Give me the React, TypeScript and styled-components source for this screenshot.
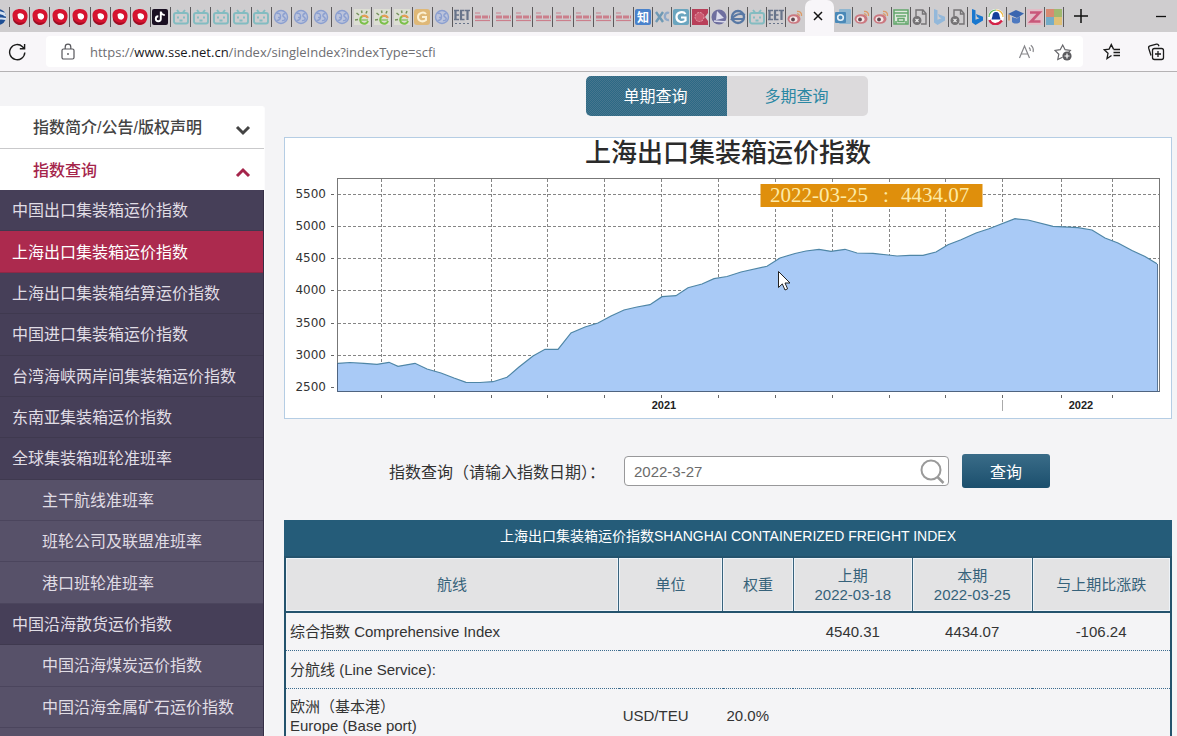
import React from 'react';
import styled, { createGlobalStyle, css } from 'styled-components';

const Global = createGlobalStyle`
  * { box-sizing: border-box; }
  body {
    margin: 0;
    background: #f4f4f6;
    font-family: "Liberation Sans", "Noto Sans CJK SC", sans-serif;
    font-size: 16px;
    color: #333;
  }
  button, input { font-family: inherit; }
`;

const Screen = styled.div`
  display: flex;
  flex-direction: column;
  height: 100vh;
  overflow: hidden;
`;

/* ---------- browser chrome ---------- */

const TabStrip = styled.div`
  display: flex;
  flex: none;
  height: 32px;
  background: #cfcdcf;
`;

const TabGroup = styled.div<{ $grow: number }>`
  display: flex;
  flex: ${(p) => p.$grow} 1 0;
  min-width: 0;
  padding: 7px 0 5px;
`;

const MiniTab = styled.button<{ $last?: boolean }>`
  flex: 1 1 0;
  min-width: 0;
  display: flex;
  align-items: center;
  justify-content: center;
  padding: 0;
  border: 0;
  border-right: 1px solid ${(p) => (p.$last ? 'transparent' : '#5c5a5c')};
  background: none;
`;

const EdgeTab = styled(MiniTab)`
  flex: none;
  width: 10px;
  margin: 7px 0 5px;
  padding-right: 3px;
  justify-content: flex-end;
  overflow: hidden;
`;

const ActiveTab = styled.button`
  flex: none;
  width: 29px;
  display: flex;
  align-items: center;
  justify-content: center;
  padding: 0 3px 0 0;
  border: 0;
  border-radius: 7px 7px 0 0;
  background: #f8f6f9;
`;

const WindowTools = styled.div`
  flex: none;
  width: 113px;
  display: flex;
  align-items: center;
  justify-content: space-between;
  padding: 0 10px 0 9px;
`;

const IconButton = styled.button`
  display: flex;
  flex: none;
  padding: 0;
  border: 0;
  background: none;
`;

const Toolbar = styled.div`
  display: flex;
  flex: none;
  align-items: center;
  gap: 20px;
  height: 40px;
  padding: 0 12px 0 8px;
  background: #f8f6f9;
  border-bottom: 1px solid #b4b2b4;
`;

const AddressBar = styled.div`
  flex: 1;
  display: flex;
  align-items: center;
  gap: 14px;
  height: 31px;
  padding: 0 10px 0 14px;
  border-radius: 4px;
  background: #fff;
`;

const Url = styled.div`
  flex: 1;
  font: 13px/20px "Open Sans", sans-serif;
  color: #6e6e72;
  b { font-weight: 400; color: #17171a; }
`;

const AddressTools = styled.div`
  display: flex;
  gap: 18px;
`;

const ToolbarEnd = styled.div`
  display: flex;
  gap: 26px;
`;

/* ---------- page ---------- */

const Page = styled.div`
  flex: 1;
  min-height: 0;
  display: flex;
  gap: 19px;
  overflow: hidden;
`;

const Sidebar = styled.nav`
  flex: none;
  width: 265px;
  display: flex;
  flex-direction: column;
  margin-top: 34px;
  border-right: 1px solid #fcfcfd;
  border-top-right-radius: 3px;
  overflow: hidden;
`;

const SectionToggle = styled.button<{ $open?: boolean }>`
  flex: none;
  display: flex;
  align-items: center;
  justify-content: space-between;
  height: ${(p) => (p.$open ? 41 : 43)}px;
  padding: 0 13px 2px 33px;
  border: 0;
  border-bottom: ${(p) => (p.$open ? 0 : 1)}px solid #c9c9cb;
  background: #fff;
  font-size: 16px;
  font-weight: 500;
  color: ${(p) => (p.$open ? '#a5254b' : '#444')};
  svg { margin-top: 8px; }
`;

const IndexList = styled.ul`
  flex: none;
  display: grid;
  grid-auto-rows: 1fr;
  min-height: 538px;
  margin: 0;
  padding: 0;
  list-style: none;
  background: #463f58;
  border-right: 1px solid #352f46;
`;

const IndexLink = styled.a<{ $sub?: boolean; $current?: boolean }>`
  display: flex;
  align-items: center;
  height: 100%;
  padding: 0 0 2px ${(p) => (p.$sub ? 42 : 12)}px;
  border-bottom: 1px solid #3f394f;
  background: #463f58;
  color: #e0dde5;
  text-decoration: none;
  ${(p) => p.$sub && css`background: #575169; border-color: #4b455d;`}
  ${(p) => p.$current && css`background: #ac2a4e; border-color: #8d2846; color: #fff;`}
`;

const ListTail = styled.div`
  flex: 1;
  background: #575169;
  border-right: 1px solid #352f46;
`;

const Main = styled.main`
  flex: 1;
  min-width: 0;
  padding: 4px 5px 0 0;
`;

const ModeSwitch = styled.div`
  display: flex;
  justify-content: center;
  padding-right: 2px;
`;

const ModeButton = styled.button<{ $active?: boolean }>`
  width: 141px;
  height: 40px;
  padding: 0 2px 2px 0;
  border: 0;
  border-radius: 0 5px 5px 0;
  background: #dcdadc;
  color: #2b87a3;
  font-size: 16px;
  ${(p) => p.$active && css`
    border-radius: 5px 0 0 5px;
    background: conic-gradient(#2c6985 25%, #47768e 0 50%, #2c6985 0 75%, #47768e 0) 0 0 / 2px 2px;
    color: #fff;
  `}
`;

const ChartPanel = styled.div`
  margin-top: 21px;
  border: 1px solid #b5cde4;
  background: #fff;
  svg { display: block; width: 100%; height: auto; }
`;

const QueryForm = styled.form`
  display: flex;
  align-items: center;
  justify-content: center;
  gap: 13px;
  margin-top: 35px;
  padding-right: 17px;
`;

const QueryLabel = styled.label`
  margin-right: 6px;
  color: #333;
`;

const DateField = styled.div`
  display: flex;
  align-items: center;
  width: 325px;
  height: 30px;
  padding: 0 3px 0 9px;
  border: 1px solid #98989a;
  border-radius: 4px;
  background: #fff;
`;

const DateInput = styled.input`
  flex: 1;
  min-width: 0;
  padding: 0;
  border: 0;
  outline: 0;
  background: none;
  font-size: 15px;
  color: #6b6b6b;
`;

const QueryButton = styled.button`
  width: 88px;
  height: 34px;
  padding: 0;
  border: 0;
  border-radius: 3px;
  background: linear-gradient(#3a6c88, #1b4f6d);
  color: #fff;
  font-size: 16px;
`;

const IndexTable = styled.table`
  width: 100%;
  margin-top: 32px;
  border-collapse: collapse;
  table-layout: fixed;
  border: 2px solid #24536d;
  font-size: 15px;
  line-height: 19px;

  caption {
    height: 36px;
    padding-top: 7px;
    background: #255c79;
    color: #fff;
    font-size: 14px;
  }
  th {
    height: 55px;
    padding: 0;
    border: 1px solid #39637c;
    border-bottom: 2px solid #24536d;
    background: #e3e3e4;
    box-shadow: inset 0 0 0 1px #eef3f8;
    font-weight: 400;
    color: #36627a;
  }
  td {
    height: 38px;
    padding: 0 4px;
    border-bottom: 1px dotted #3b6b8e;
    text-align: center;
    color: #333;
  }
  td:nth-child(-n + 3) { text-align: left; }
  tbody tr:last-child td { height: 56px; }
`;

/* ---------- tab icons ---------- */

type IconName =
  | 'edge' | 'red' | 'tiktok' | 'bili' | 'globe' | 'sun' | 'gold' | 'eet' | 'lines' | 'zhi' | 'xc' | 'g'
  | 'puzzle' | 'sail' | 'sphere' | 'weibo' | 'outlook' | 'shop' | 'file' | 'bing' | 'bingDark' | 'qq' | 'cap' | 'z' | 'ms';

const glyphs: Record<IconName, React.ReactNode> = {
  edge: (
    <g>
      <circle cx="8" cy="8" r="8" fill="#1e4e94" />
      <path d="M1 9C5 3 12 3 16 7M3 13c4-4 9-4 13-3M8 3c3 0 5 1 7 2" stroke="#d8e4f2" strokeWidth="2" fill="none" />
    </g>
  ),
  red: (
    <g>
      <path d="M8 0C13 0 15.500 3 15.500 7c0 5-3 9-7.500 9-2 0-3-1-5-3C1 11 .5 9 .5 6 .5 2 4 0 8 0Z" fill="#d5142f" />
      <path d="M1 9c2 4 7 6 12 4-2 3-7 4-10 1C1 12 1 11 1 9Z" fill="#a00d25" />
      <path d="M5.500 5.500c1-1.500 3-1.500 4-1 2 .5 3 2 2.500 4-.5 1.500-2 2.500-4 2C6.500 10.200 6 9 5.800 7.800Z" fill="#fff" />
    </g>
  ),
  tiktok: (
    <g>
      <rect x="0" y="0" width="16" height="16" rx="2" fill="#1a0f22" />
      <path d="M8.800 2.500v7.300a2.500 2.500 0 1 1-2.500-2.500M8.800 2.500c.3 2.300 1.800 3.400 4 3.600" stroke="#fff" strokeWidth="1.900" fill="none" />
    </g>
  ),
  bili: (
    <g fill="none" stroke="#83bcc1" strokeWidth="1.900">
      <rect x="1" y="4" width="14" height="10.500" rx="2" />
      <path d="M4 1l2.500 3M12 1L9.500 4M5 7.500v2M11 7.500v2M6.500 11.500h3" />
    </g>
  ),
  globe: (
    <g fill="none" stroke="#8b9fd0" strokeWidth="1.400">
      <circle cx="8" cy="8" r="6.500" fill="#bcc4dc" />
      <path d="M3.500 4.500c3-1 4 1 4 3s-1 4-4 4M12.500 4.500c-2 0-3 1-2.500 2.500l2 2c1 1.500-1 3-3 2.500M5 8.500h3" />
    </g>
  ),
  sun: (
    <g>
      <rect width="16" height="16" fill="#dddfd4" />
      <path d="M13.500 8.500a4 4 0 1 0 .5 3.500" fill="none" stroke="#7cc04a" strokeWidth="2" />
      <path d="M8 7.500a4 4 0 0 1 6 1.500" stroke="#ea9a56" strokeWidth="2" fill="none" />
      <path d="M7 11h7" stroke="#8cc46a" strokeWidth="1.500" />
      <path d="M2.500 4l2.500 2M7.500 1.500l.5 2.500M13 2l-1 2.500M1 11l3-.5" stroke="#77935e" strokeWidth="1.500" />
    </g>
  ),
  gold: (
    <g>
      <rect width="16" height="16" rx="3" fill="#dfb877" />
      <path d="M12 5C10 2.500 4 3.500 4 8s5 5.500 8 3V8H8" fill="none" stroke="#fbf0d3" strokeWidth="2" />
    </g>
  ),
  eet: (
    <g stroke="#68748a" fill="none">
      <path d="M0 1.500h5M1 6h4M0 10.500h5M6 1.500h4.500M6.500 6h4M6 10.500h4.500M11 1.500h5" strokeWidth="1.700" />
      <path d="M1.500 1v10M7 1v10M13.500 1v10" strokeWidth="2.200" />
      <path d="M1 14.500h14" strokeDasharray="2 2" />
    </g>
  ),
  lines: (
    <g stroke="#cb7f8c">
      <path d="M1 4h5" strokeWidth="1" />
      <path d="M1 8h15" strokeWidth="3" strokeDasharray="6 1" />
      <path d="M1 11.500h15" strokeWidth="1.200" />
    </g>
  ),
  zhi: (
    <g>
      <rect width="16" height="16" rx="2" fill="#4a82cb" />
      <text x="8" y="12.500" fontSize="12" fontWeight="700" textAnchor="middle" fill="#fff">知</text>
    </g>
  ),
  xc: (
    <g fill="none" strokeWidth="2.400">
      <path d="M2 3l7 10M9 3L2 13" stroke="#6f99b4" />
      <path d="M15 4c-5-2-6 8 0 7" stroke="#8fa9c8" />
    </g>
  ),
  g: (
    <g>
      <rect width="16" height="16" rx="2" fill="#6aa5bf" />
      <path d="M12.500 5C10.500 2 3.500 2.500 3.500 8s6 6 9 3.500V8.500H8" fill="none" stroke="#fff" strokeWidth="2.200" />
    </g>
  ),
  puzzle: (
    <g>
      <path d="M0 0h16v4l-3 4 3 4v4H0Z" fill="#b9405a" />
      <circle cx="7.500" cy="8" r="4.500" fill="#cc5a70" stroke="#e4a3af" strokeDasharray="2 1" />
    </g>
  ),
  sail: (
    <g>
      <circle cx="8" cy="8" r="7.500" fill="#6f6f9f" />
      <path d="M6 2l7 7-8 2Z" fill="#dcdcec" />
      <path d="M3 12l12 1" stroke="#dcdcec" strokeWidth="1.500" />
    </g>
  ),
  sphere: (
    <g fill="none" stroke="#5878a4">
      <circle cx="8" cy="8" r="6" strokeWidth="2.400" />
      <path d="M1 11C5 5 10 4 15 6M3 10h10" strokeWidth="2" />
    </g>
  ),
  weibo: (
    <g>
      <ellipse cx="7" cy="10" rx="6.500" ry="4.800" fill="#cb7880" />
      <ellipse cx="6.500" cy="10.200" rx="4" ry="3" fill="#f3e6e6" />
      <circle cx="6" cy="10.500" r="1.900" fill="#604850" />
      <path d="M10 2.500c3-.5 5 1.500 4.500 4.500M10 5c1.500-.3 2.500.6 2.200 2" fill="none" stroke="#dc9a66" strokeWidth="1.300" />
    </g>
  ),
  outlook: (
    <g>
      <rect x="4" y="0" width="12" height="15" rx="1" fill="#8fb6d0" />
      <rect x="0" y="3" width="11" height="11" rx="1" fill="#4a89b8" />
      <circle cx="5.500" cy="8.500" r="2.800" fill="none" stroke="#e6f1f8" strokeWidth="1.600" />
    </g>
  ),
  shop: (
    <g fill="none" stroke="#63a76c" strokeWidth="1.500">
      <rect x="1" y="1" width="14" height="14" fill="#dfe8dd" />
      <path d="M1 4h14M3 7h10M5 9.500h6v3H5zM3 15v-3M13 15v-3" />
    </g>
  ),
  file: (
    <g fill="none" stroke="#757375" strokeWidth="1.400">
      <path d="M4 7V1h7l3 3.500V15H9M10.500 1v4H14" />
      <circle cx="5" cy="11.500" r="3.800" fill="#757375" />
      <path d="M3.500 10l3 3M6.500 10l-3 3" stroke="#eee" strokeWidth="1.100" />
    </g>
  ),
  bing: <path d="M3 0l3.500 1.300v9.500l4-1.500L8 8 7 5l7 2.700V11.500L6.500 16 3 13.500Z" fill="#93b8da" />,
  bingDark: <path d="M3 0l3.500 1.300v9.500l4-1.500L8 8 7 5l7 2.700V11.500L6.500 16 3 13.500Z" fill="#1877cf" />,
  qq: (
    <g>
      <circle cx="8" cy="8" r="8" fill="#fff" />
      <path d="M1.500 11c2 5 8 6 12.500.5" stroke="#d32348" strokeWidth="2.500" fill="none" />
      <path d="M1 8c0-4 3-7 7-7" stroke="#5cb85c" strokeWidth="1.200" fill="none" />
      <path d="M8 1c4 0 7 3 7 7" stroke="#efb83d" strokeWidth="1.200" fill="none" />
      <path d="M8 3c2.500 0 3.500 2 3.500 4l1 3.500h-9l1-3.500C4.500 5 5.500 3 8 3Z" fill="#153f9b" />
    </g>
  ),
  cap: (
    <g>
      <path d="M0 5l8-4 8 3.500-7 4.500Z" fill="#3b66b0" />
      <path d="M4 8v5c2 2 6 2 8 0V7L9 9.500Z" fill="#4e79c0" />
      <path d="M1 5.500v6" stroke="#d4883a" strokeWidth="1.200" />
    </g>
  ),
  z: (
    <g>
      <rect width="16" height="16" fill="#e2bcc6" />
      <path d="M3 3.500h9.500L4 12.500h9.500" fill="none" stroke="#c9577a" strokeWidth="2.600" />
    </g>
  ),
  ms: (
    <g>
      <rect width="8" height="8" fill="#d88a72" />
      <rect x="8" width="8" height="8" fill="#a0b870" />
      <rect y="8" width="8" height="8" fill="#74acc8" />
      <rect x="8" y="8" width="8" height="8" fill="#dfc077" />
    </g>
  ),
};

const IconSvg = styled.svg`
  flex: none;
`;

const Favicon = ({ name }: { name: IconName }) => (
  <IconSvg width="16" height="16" viewBox="0 0 16 16" aria-hidden="true">{glyphs[name]}</IconSvg>
);

const fill = (name: IconName, n: number): IconName[] => Array(n).fill(name);

const leftTabs: IconName[] = [
  ...fill('red', 7), 'tiktok', ...fill('bili', 5), ...fill('globe', 4), ...fill('sun', 3),
  'gold', 'globe', 'eet', ...fill('lines', 8),
];
const middleTabs: IconName[] = ['zhi', 'xc', 'g', 'puzzle', 'sail', 'sphere', 'bili', 'eet', 'weibo'];
const rightTabs: IconName[] = [
  'outlook', 'weibo', 'weibo', 'shop', 'file', 'bing', 'file', 'bingDark', 'qq', 'cap', 'z', 'ms',
];

const Tabs = ({ grow, icons, openEnd }: { grow: number; icons: IconName[]; openEnd?: boolean }) => (
  <TabGroup $grow={grow}>
    {icons.map((name, i) => (
      <MiniTab key={i} aria-label={name} $last={openEnd && i === icons.length - 1}>
        <Favicon name={name} />
      </MiniTab>
    ))}
  </TabGroup>
);

const BrowserChrome = () => (
  <>
    <TabStrip>
      <EdgeTab aria-label="edge"><Favicon name="edge" /></EdgeTab>
      <Tabs grow={624} icons={leftTabs} />
      <Tabs grow={171} icons={middleTabs} openEnd />
      <ActiveTab aria-label="Close tab">
        <svg width="10" height="10" viewBox="0 0 10 10"><path d="M1 1l8 8M9 1L1 9" stroke="#111" strokeWidth="1.500" /></svg>
      </ActiveTab>
      <Tabs grow={230} icons={rightTabs} />
      <WindowTools>
        <IconButton aria-label="New tab">
          <svg width="16" height="16" viewBox="0 0 16 16"><path d="M1 8h14M8 1v14" stroke="#111" strokeWidth="1.500" /></svg>
        </IconButton>
        <IconButton aria-label="Minimize">
          <svg width="12" height="12" viewBox="0 0 12 12"><path d="M1 6.500h10" stroke="#111" strokeWidth="1.300" /></svg>
        </IconButton>
      </WindowTools>
    </TabStrip>
    <Toolbar>
      <IconButton aria-label="Reload">
        <svg width="18" height="18" viewBox="0 0 18 18" fill="none" stroke="#1b1b1b" strokeWidth="1.400">
          <path d="M16.800 9.500a7.600 7.600 0 1 1-2.300-5.800l1.800 1.800M16.600 1v4.800h-4.800" />
        </svg>
      </IconButton>
      <AddressBar>
        <svg width="16" height="18" viewBox="0 0 16 18" fill="none" stroke="#55555a" strokeWidth="1.200">
          <rect x="2" y="6" width="12" height="10" rx="1.500" />
          <path d="M5.200 6V4a2.800 2.800 0 0 1 5.600 0v2" />
          <circle cx="8" cy="11" r=".9" fill="#55555a" stroke="none" />
        </svg>
        <Url>https://<b>www.sse.net.cn</b>/index/singleIndex?indexType=scfi</Url>
        <AddressTools>
          <IconButton aria-label="Read aloud">
            <svg width="18" height="18" viewBox="0 0 18 18" fill="none" stroke="#858589" strokeWidth="1.200">
              <path d="M1.500 15L6.500 3l5 12M3.200 11h6.600M11 4.500c1 .7 1.500 2 1.300 3.500M12.800 2.300c2 1.500 2.900 4 2.300 6.700" />
            </svg>
          </IconButton>
          <IconButton aria-label="Add to favorites">
            <svg width="19" height="18" viewBox="0 0 19 18" fill="none" stroke="#66666a" strokeWidth="1.200">
              <path d="M8.500 14.200L3.800 16.500l1-5.200L1 7.500l5.200-.8L8.700 2l2.400 4.700 5.200.8-1.500 1.500" />
              <circle cx="13" cy="13" r="4.600" fill="#5b5b5f" stroke="none" />
              <path d="M13 10.500v5M10.500 13h5" stroke="#fff" />
            </svg>
          </IconButton>
        </AddressTools>
      </AddressBar>
      <ToolbarEnd>
        <IconButton aria-label="Favorites">
          <svg width="18" height="18" viewBox="0 0 18 18" fill="none" stroke="#1b1b1b" strokeWidth="1.300">
            <path d="M8.500 12.500L4 15.500l1-5.200-3.800-3.500 4.900-.7L8.300 1.600l2.200 4.500M10.500 6.500H17M10.500 9.500H17M10.500 12.500H17" />
          </svg>
        </IconButton>
        <IconButton aria-label="Collections">
          <svg width="18" height="18" viewBox="0 0 18 18" fill="none" stroke="#1b1b1b" strokeWidth="1.300">
            <path d="M4 12.500L1.700 5.200C1.400 4 2 3.200 3 2.900l6.500-1.800c1-.2 1.800.2 2.100 1.200l.3 1" />
            <rect x="5.500" y="5.500" width="11" height="11" rx="2" />
            <path d="M11 8v6M8 11h6" />
          </svg>
        </IconButton>
      </ToolbarEnd>
    </Toolbar>
  </>
);

/* ---------- chart ---------- */

const series: [number, number][] = [
  [338, 363.3], [350, 362.5], [364, 363.3], [377, 364.3], [389, 362.3], [398, 366.3], [415, 363.3], [427, 369],
  [441, 373], [454, 378], [466, 382.3], [480, 382.5], [493, 381.7], [507, 377.3], [519, 367], [533, 356],
  [545, 349.3], [558, 349.3], [571, 333], [585, 327], [598, 323], [611, 316], [624, 310], [637, 307],
  [650, 304.7], [662, 296.7], [676, 295.7], [688, 287.7], [702, 284], [714, 278.7], [727, 276.5], [741, 272],
  [767, 266.3], [780, 258], [795, 253.5], [806, 251], [819, 249.3], [831, 251.3], [845, 249.3], [857, 253],
  [873, 253.3], [897, 256], [910, 255.3], [923, 255.3], [936, 252], [948, 244.7], [961, 239.7], [976, 233],
  [989, 228.7], [1015, 218.7], [1028, 220], [1053, 226.3], [1078, 227.7], [1092, 230], [1105, 238],
  [1118, 243], [1132, 250.5], [1145, 256.5], [1157, 263.7],
];
const months = [381.5, 434.5, 491.5, 547.5, 604.5, 661.5, 718.5, 775.5, 832.5, 889.5, 945.5, 1002.5, 1061.5, 1112.5];
const levels: [number, number][] = [
  [5500, 194], [5000, 226], [4500, 258], [4000, 290], [3500, 323], [3000, 355], [2500, 387],
];
const line = series.map(([x, y]) => `${x},${y}`).join(' ');

const FreightChart = () => (
  <svg viewBox="285 138 886 280" role="img" aria-label="上海出口集装箱运价指数">
    <text x="728" y="162" fontSize="26" fontWeight="500" textAnchor="middle" fill="#2b2b2b">上海出口集装箱运价指数</text>
    <g stroke="#858585" strokeDasharray="3 2">
      {months.map((x) => <path key={x} d={`M${x} 179V391`} />)}
      {levels.map(([v, y]) => <path key={v} d={`M338 ${y + 0.5}H1159`} />)}
    </g>
    <polygon points={`338,391 ${line} 1157,391`} fill="#a9caf6" />
    <path d="M1158.500 264V391" stroke="#fff" />
    <polyline points={line} fill="none" stroke="#4f86a6" strokeWidth="1.200" />
    <path d="M1157.500 264V391" stroke="#5a7898" />
    <rect x="337.500" y="178.500" width="822" height="213" fill="none" stroke="#777" />
    <path d="M337.500 363V391.500H1159.500" fill="none" stroke="#4f6480" />
    <g stroke="#666">
      {months.map((x) => <path key={x} d={`M${x} 395V398`} />)}
      {levels.map(([v, y]) => <path key={v} d={`M331 ${y + 0.5}H334`} />)}
    </g>
    <path d="M1002.500 400V411" stroke="#aaa" />
    <g fontFamily="DejaVu Sans, sans-serif" fontSize="12" textAnchor="end" fill="#333">
      {levels.map(([v, y]) => <text key={v} x="326" y={y + 4}>{v}</text>)}
    </g>
    <g fontSize="11" fontWeight="700" textAnchor="middle" fill="#222">
      <text x="664" y="409">2021</text>
      <text x="1081" y="409">2022</text>
    </g>
    <rect x="760.500" y="184" width="222" height="23" fill="#df8f0c" />
    <g fontFamily="Liberation Serif, serif" fontSize="21" fill="#fdeaa6">
      <text x="770" y="202">2022-03-25</text>
      <text x="883" y="202">:</text>
      <text x="901" y="202">4434.07</text>
    </g>
    <path d="M778.500 271.500v16l3.800-3.600 2.700 6.100 2.600-1.200-2.600-5.800h5Z" fill="#fff" stroke="#222" />
  </svg>
);

/* ---------- sidebar ---------- */

const indexes: { name: string; sub?: boolean; current?: boolean }[] = [
  { name: '中国出口集装箱运价指数' },
  { name: '上海出口集装箱运价指数', current: true },
  { name: '上海出口集装箱结算运价指数' },
  { name: '中国进口集装箱运价指数' },
  { name: '台湾海峡两岸间集装箱运价指数' },
  { name: '东南亚集装箱运价指数' },
  { name: '全球集装箱班轮准班率' },
  { name: '主干航线准班率', sub: true },
  { name: '班轮公司及联盟准班率', sub: true },
  { name: '港口班轮准班率', sub: true },
  { name: '中国沿海散货运价指数' },
  { name: '中国沿海煤炭运价指数', sub: true },
  { name: '中国沿海金属矿石运价指数', sub: true },
];

const Chevron = ({ up }: { up?: boolean }) => (
  <svg width="16" height="11" viewBox="0 0 16 11" fill="none" stroke="currentColor" strokeWidth="3">
    <path d={up ? 'M2 9l6-6 6 6' : 'M2 2l6 6 6-6'} />
  </svg>
);

export default function App() {
  return (
    <Screen>
      <Global />
      <BrowserChrome />
      <Page>
        <Sidebar>
          <SectionToggle>指数简介/公告/版权声明<Chevron /></SectionToggle>
          <SectionToggle $open>指数查询<Chevron up /></SectionToggle>
          <IndexList>
            {indexes.map(({ name, sub, current }) => (
              <li key={name}>
                <IndexLink href="#" $sub={sub} $current={current}>{name}</IndexLink>
              </li>
            ))}
          </IndexList>
          <ListTail />
        </Sidebar>
        <Main>
          <ModeSwitch>
            <ModeButton $active>单期查询</ModeButton>
            <ModeButton>多期查询</ModeButton>
          </ModeSwitch>
          <ChartPanel><FreightChart /></ChartPanel>
          <QueryForm>
            <QueryLabel htmlFor="date">指数查询（请输入指数日期）：</QueryLabel>
            <DateField>
              <DateInput id="date" defaultValue="2022-3-27" />
              <svg width="26" height="26" viewBox="0 0 26 26" fill="none" stroke="#9a9a9a" strokeWidth="2">
                <circle cx="12" cy="12" r="9.500" />
                <path d="M18.500 19l6 6" strokeWidth="2.500" />
              </svg>
            </DateField>
            <QueryButton type="button">查询</QueryButton>
          </QueryForm>
          <IndexTable>
            <caption>上海出口集装箱运价指数SHANGHAI CONTAINERIZED FREIGHT INDEX</caption>
            <colgroup>
              {[334, 104, 71, 119, 120, 139].map((w, i) => <col key={i} style={{ width: `${(w / 887) * 100}%` }} />)}
            </colgroup>
            <thead>
              <tr>
                <th>航线</th>
                <th>单位</th>
                <th>权重</th>
                <th>上期<br />2022-03-18</th>
                <th>本期<br />2022-03-25</th>
                <th>与上期比涨跌</th>
              </tr>
            </thead>
            <tbody>
              <tr><td>综合指数 Comprehensive Index</td><td /><td /><td>4540.31</td><td>4434.07</td><td>-106.24</td></tr>
              <tr><td>分航线 (Line Service):</td><td /><td /><td /><td /><td /></tr>
              <tr><td>欧洲（基本港）<br />Europe (Base port)</td><td>USD/TEU</td><td>20.0%</td><td /><td /><td /></tr>
            </tbody>
          </IndexTable>
        </Main>
      </Page>
    </Screen>
  );
}
